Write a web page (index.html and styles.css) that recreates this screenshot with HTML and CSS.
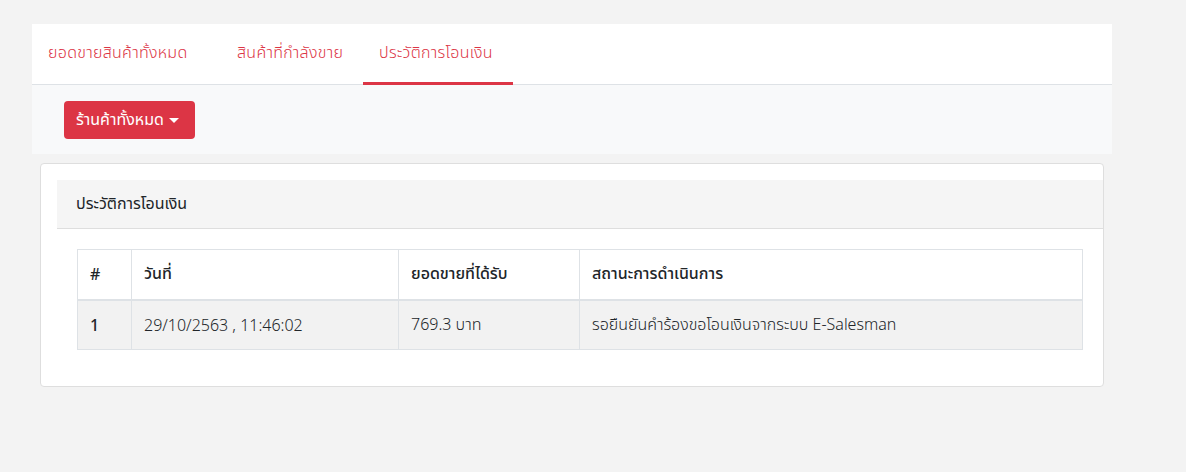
FILE: index.html
```html
<!DOCTYPE html>
<html lang="th">
<head>
<meta charset="utf-8">
<link rel="stylesheet" href="styles.css">
</head>
<body>
<div class="wrap">
  <div class="panel">
    <nav class="tabs">
      <a class="tab t1">ยอดขายสินค้าทั้งหมด</a>
      <a class="tab t2">สินค้าที่กำลังขาย</a>
      <a class="tab t3 active">ประวัติการโอนเงิน</a>
    </nav>
    <div class="toolbar">
      <button class="btn">ร้านค้าทั้งหมด<span class="caret"></span></button>
    </div>
  </div>
  <div class="card">
    <div class="card-header">ประวัติการโอนเงิน</div>
    <div class="card-body">
      <table class="tbl">
        <thead>
          <tr><th class="c1">#</th><th class="c2">วันที่</th><th class="c3">ยอดขายที่ได้รับ</th><th class="c4">สถานะการดำเนินการ</th></tr>
        </thead>
        <tbody>
          <tr><td class="num">1</td><td>29/10/2563 , 11:46:02</td><td>769.3 บาท</td><td>รอยืนยันคำร้องขอโอนเงินจากระบบ E-Salesman</td></tr>
        </tbody>
      </table>
    </div>
  </div>
</div>
</body>
</html>
```

FILE: styles.css
```css
html, body { margin: 0; padding: 0; }
body {
  background: #f3f3f3;
  font-family: "Noto Sans", "Noto Sans Thai", "DejaVu Sans", sans-serif;
  color: #212529;
  font-size: 16px;
}
.wrap { width: 1080px; padding: 24px 0 0 32px; }
.panel { background: #fff; }
.tabs {
  display: flex;
  height: 61px;
  border-bottom: 1px solid #dee2e6;
  box-sizing: border-box;
}
.tab {
  display: flex;
  align-items: center;
  padding: 0 16px;
  color: #dc3545;
  font-size: 16px;
  font-weight: 300;
  letter-spacing: 0.3px;
  border-bottom: 3px solid transparent;
  margin-bottom: -1px;
  box-sizing: border-box;
  white-space: nowrap;
}
.t1 { width: 189px; }
.t2 { width: 142px; }
.t3 { width: 150px; }
.tab.active { border-bottom-color: #dc3545; }
.toolbar {
  background: #f8f9fa;
  height: 69px;
  padding: 16px 32px 0;
  box-sizing: border-box;
}
.btn {
  display: inline-flex;
  align-items: center;
  height: 38px;
  padding: 0 12px;
  background: #dc3545;
  color: #fff;
  border: none;
  border-radius: 4px;
  font-family: inherit;
  font-size: 16px;
  width: 131px;
  box-sizing: border-box;
  white-space: nowrap;
}
.caret {
  display: inline-block;
  margin-left: 5px;
  border-top: 5px solid #fff;
  border-left: 5px solid transparent;
  border-right: 5px solid transparent;
}
.card {
  margin: 9px 8px 0;
  background: #fff;
  border: 1px solid #dedede;
  border-radius: 4px;
  padding: 16px 0 16px 16px;
}
.card-header {
  background: #f5f5f5;
  border-bottom: 1px solid #dedede;
  height: 49px;
  box-sizing: border-box;
  padding: 0 19px;
  display: flex;
  align-items: center;
  font-size: 16px;
}
.card-body { padding: 20px 20px 20px; }
.tbl {
  width: 1006px;
  border-collapse: collapse;
  font-size: 16px;
}
.tbl th, .tbl td {
  border: 1px solid #dee2e6;
  padding: 0 12px;
  text-align: left;
  height: 50px;
  box-sizing: border-box;
}
.tbl th { font-weight: 500; border-bottom: 2px solid #dee2e6; }
.tbl tbody tr { background: #f2f2f2; }
.tbl td { font-weight: 300; }
.tbl td.num { font-weight: 500; }
.c1 { width: 54px; }
.c2 { width: 267px; }
.c3 { width: 181px; }
```
